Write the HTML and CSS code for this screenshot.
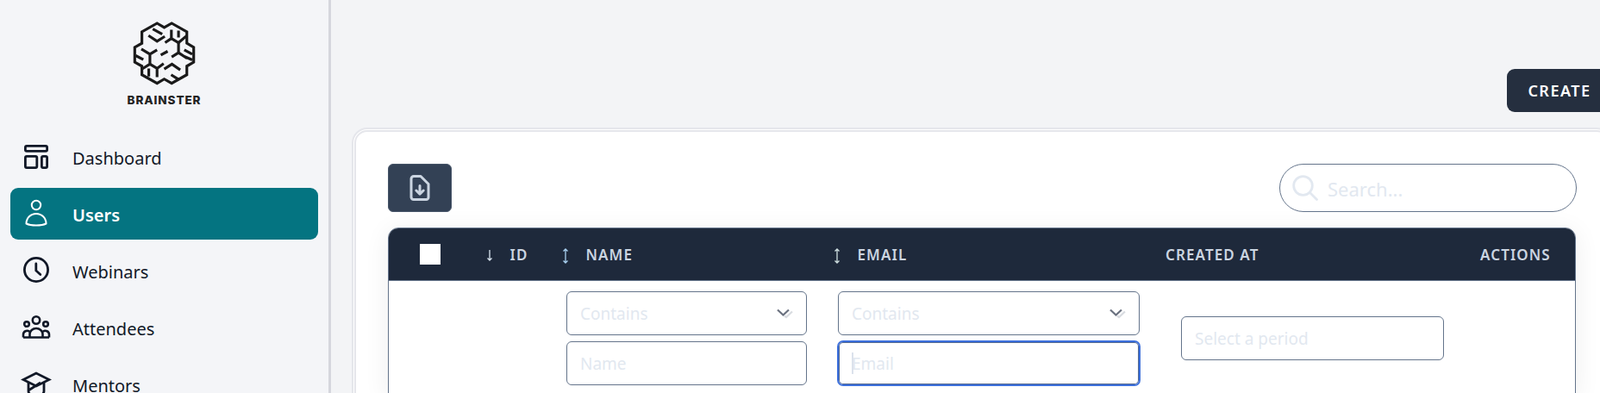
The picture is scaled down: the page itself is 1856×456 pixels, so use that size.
FILE: index.html
```html
<!DOCTYPE html>
<html lang="en">
<head>
    <meta charset="UTF-8">
    <meta name="viewport" content="width=device-width, initial-scale=1.0">
    <title>Users - Brainster</title>
    <link rel="stylesheet" href="styles.css">
</head>
<body>
    <aside class="sidebar">
        <div class="logo">
            <svg class="logo-mark" viewBox="455 70 230 235" fill="none" stroke="#1a1a1a" stroke-width="9.500" stroke-linejoin="miter">
                <path d="M545 82l25 15 26-15 53 30v40l24 14v52l-24 14v30l-53 30-26-15-25 15-53-30v-30l-25-14v-52l25-14v-40z"/>
                <path d="M515 125l30 20 27-17M530 102l33 18M595 105v30l-22 15M595 135l25 15 28-24M620 108v24"/>
                <path d="M490 172l30 18 25-15M520 190v35l-26 16M470 195l27 14M558 193l24-13"/>
                <path d="M620 150v35l-24 15M620 185l30 20M640 175l28 15M640 198l28 12"/>
                <path d="M520 225l25 15 23-17M545 240v30M516 240v28M570 242l27-17 29 20M594 262l26 16"/>
            </svg>
            <span class="logo-name">BRAINSTER</span>
        </div>
        <nav class="nav">
            <a class="nav-item" href="#">
                <svg class="nav-icon" viewBox="0 0 36 36" fill="none" stroke="currentColor" stroke-width="2.800">
                    <rect x="5.400" y="5.400" width="25.200" height="6" rx="1.600"/>
                    <rect x="5.400" y="17.400" width="13.400" height="13.200" rx="1.600"/>
                    <rect x="24.400" y="17.400" width="6.200" height="13.200" rx="1.600"/>
                </svg>
                <span class="nav-label">Dashboard</span>
            </a>
            <a class="nav-item active" href="#">
                <svg class="nav-icon" viewBox="0 0 36 36" fill="none" stroke="currentColor" stroke-width="2">
                    <circle cx="18" cy="8" r="5.200"/>
                    <path d="M6.500 29.500c0-6.500 5-11.500 11.500-11.500s11.500 5 11.500 11.500c-3 1.500-7.500 2-11.500 2s-8.500-.5-11.500-2z"/>
                </svg>
                <span class="nav-label">Users</span>
            </a>
            <a class="nav-item" href="#">
                <svg class="nav-icon" viewBox="0 0 36 36" fill="none" stroke="currentColor" stroke-width="2.800">
                    <circle cx="18" cy="17" r="13.600"/>
                    <path d="M17.800 10v8l5 4.500" stroke-linecap="round"/>
                </svg>
                <span class="nav-label">Webinars</span>
            </a>
            <a class="nav-item" href="#">
                <svg class="nav-icon" viewBox="0 0 36 36" fill="none" stroke="currentColor" stroke-width="2.600">
                    <circle cx="18" cy="9.500" r="4.200"/>
                    <circle cx="7" cy="14" r="2.800"/>
                    <circle cx="29" cy="14" r="2.800"/>
                    <path d="M3 29.500h30M3 29.500v-3.500a4.500 4.500 0 0 1 7-3.500M33 29.500v-3.500a4.500 4.500 0 0 0-7-3.500M10.500 29.500v-4a7.500 6.500 0 0 1 15 0v4"/>
                </svg>
                <span class="nav-label">Attendees</span>
            </a>
            <a class="nav-item" href="#">
                <svg class="nav-icon" viewBox="0 0 36 36" fill="none" stroke="currentColor" stroke-width="2.800">
                    <path d="M18 5L3 12.500 18 20l15-7.500z"/>
                    <path d="M9 16v10c0 3 4 6 9 6s9-3 9-6V16M9 25l14-9"/>
                </svg>
                <span class="nav-label">Mentors</span>
            </a>
        </nav>
    </aside>

    <main class="main">
        <div class="page-actions">
            <button class="create-button" type="button">CREATE</button>
        </div>

        <section class="card">
            <div class="toolbar">
                <button class="export-button" type="button" aria-label="Export">
                    <svg width="24" height="30" viewBox="0 0 24 30" fill="none" stroke="#cbd5e1" stroke-width="3" stroke-linecap="round" stroke-linejoin="round">
                        <path d="M5 1.500h8l9 9v15.500a2.500 2.500 0 0 1-2.500 2.500H5A3 3 0 0 1 2 26V4.500a3 3 0 0 1 3-3z"/>
                        <path d="M12 12.500V22M7.800 18L12 22.200 16.200 18"/>
                    </svg>
                </button>
                <label class="search">
                    <svg width="30" height="30" viewBox="0 0 30 30" fill="none" stroke="#e2e8f0" stroke-width="2.800" stroke-linecap="round">
                        <circle cx="12.500" cy="12.500" r="10.800"/>
                        <path d="M20.500 20.500l8 8"/>
                    </svg>
                    <input class="search-input" type="text" placeholder="Search...">
                </label>
            </div>

            <div class="table-wrap">
                <table class="users-table">
                    <colgroup>
                        <col class="col-check">
                        <col class="col-id">
                        <col class="col-name">
                        <col class="col-email">
                        <col class="col-created">
                        <col>
                    </colgroup>
                    <thead>
                        <tr>
                            <th class="th-check"><span class="checkbox"></span></th>
                            <th class="th-id">
                                <svg class="sort-icon" width="8" height="18" viewBox="0 0 8 18" fill="none" stroke="#d8e4ee" stroke-width="1.300"><path d="M4 2v12M1.500 11.500L4 14l2.500-2.500"/></svg>
                                ID
                            </th>
                            <th>
                                <svg class="sort-icon" width="8" height="18" viewBox="0 0 8 18" fill="none" stroke="#a9d0f0" stroke-width="1.300"><path d="M4 1v16M1.500 3.500L4 1l2.500 2.500M1.500 14.500L4 17l2.500-2.500"/></svg>
                                NAME
                            </th>
                            <th>
                                <svg class="sort-icon" width="8" height="18" viewBox="0 0 8 18" fill="none" stroke="#cfdfe0" stroke-width="1.300"><path d="M4 1v16M1.500 3.500L4 1l2.500 2.500M1.500 14.500L4 17l2.500-2.500"/></svg>
                                EMAIL
                            </th>
                            <th class="th-created">CREATED AT</th>
                            <th class="th-actions">ACTIONS</th>
                        </tr>
                    </thead>
                    <tbody>
                        <tr class="filter-row">
                            <td></td>
                            <td></td>
                            <td>
                                <div class="filter-stack">
                                    <div class="select-wrap">
                                        <select class="field"><option>Contains</option></select>
                                        <svg class="chevrons" width="20" height="12" viewBox="0 0 20 12" fill="none" stroke-width="2.200"><path d="M1 1.500l6.500 6 6.500-6" stroke="#6b7280"/><path d="M9 8.500l2 1.500 7-6.500" stroke="#d8dbe0"/></svg>
                                    </div>
                                    <input class="field" type="text" placeholder="Name">
                                </div>
                            </td>
                            <td>
                                <div class="filter-stack">
                                    <div class="select-wrap">
                                        <select class="field"><option>Contains</option></select>
                                        <svg class="chevrons" width="20" height="12" viewBox="0 0 20 12" fill="none" stroke-width="2.200"><path d="M1 1.500l6.500 6 6.500-6" stroke="#6b7280"/><path d="M9 8.500l2 1.500 7-6.500" stroke="#d8dbe0"/></svg>
                                    </div>
                                    <div class="caret-wrap">
                                        <input class="field focused" type="text" placeholder="Email">
                                    </div>
                                </div>
                            </td>
                            <td class="td-period">
                                <input class="field" type="text" placeholder="Select a period">
                            </td>
                            <td></td>
                        </tr>
                    </tbody>
                </table>
            </div>
        </section>
    </main>
</body>
</html>
```

FILE: styles.css
```css
* {
    box-sizing: border-box;
}

html,
body {
    height: 456px;
    overflow: hidden;
}

body {
    margin: 0;
    display: flex;
    font-family: 'Noto Sans', sans-serif;
    background-color: #f3f4f6;
    color: #111827;
}

.sidebar {
    flex: 0 0 384px;
    height: 456px;
    padding: 23px 12px 0;
    border-right: 3px solid #d5d6dd;
    background-color: #f4f5f8;
}

.logo {
    display: flex;
    flex-direction: column;
    align-items: center;
    height: 129px;
}

.logo-mark {
    width: 77px;
    height: 78px;
}

.logo-name {
    margin-top: 7px;
    font-family: 'Inter', sans-serif;
    font-size: 13.5px;
    font-weight: 800;
    line-height: 16px;
    letter-spacing: 0.9px;
    color: #222222;
}

.nav {
    display: flex;
    flex-direction: column;
    gap: 6px;
}

.nav-item {
    display: flex;
    align-items: center;
    gap: 24px;
    height: 60px;
    padding-left: 12px;
    border-radius: 9px;
    font-size: 20px;
    color: #111827;
    text-decoration: none;
}

.nav-item.active {
    background-color: #047481;
    color: #ffffff;
    font-weight: 600;
}

.nav-label {
    padding-top: 2px;
}

.nav-icon {
    flex: 0 0 36px;
    width: 36px;
    height: 36px;
}

.main {
    flex: 0 0 1486px;
    padding: 80px 0 0 24px;
}

.page-actions {
    display: flex;
    justify-content: flex-end;
}

.create-button {
    width: 122px;
    height: 50px;
    border: none;
    border-radius: 9px;
    background-color: #252f3f;
    color: #ffffff;
    font-family: inherit;
    font-size: 18px;
    font-weight: 600;
    letter-spacing: 1.5px;
}

.card {
    width: 1462px;
    margin-top: 18px;
    padding: 37px;
    border: 5px double #e5e6eb;
    border-radius: 18px;
    background-color: #ffffff;
}

.toolbar {
    display: flex;
    justify-content: space-between;
    margin-bottom: 18px;
}

.export-button {
    display: flex;
    align-items: center;
    justify-content: center;
    width: 74px;
    height: 56px;
    border: 1px solid #475569;
    border-radius: 6px;
    background-color: #334155;
}

.search {
    display: flex;
    align-items: center;
    gap: 11px;
    width: 345px;
    height: 56px;
    margin-right: -1px;
    padding-left: 14px;
    border: 1px solid #64748b;
    border-radius: 28px;
}

.search-input {
    flex: 1;
    min-width: 0;
    border: none;
    outline: none;
    padding: 2px 0 0;
    font-family: inherit;
    font-size: 22px;
    background: transparent;
}

.search-input::placeholder,
.field::placeholder {
    color: #e2e8f0;
    opacity: 1;
}

.table-wrap {
    border: 1px solid #64748b;
    border-radius: 12px 12px 0 0;
    box-shadow: 0 4px 30px rgba(0, 0, 0, 0.07);
}

.users-table {
    width: 100%;
    table-layout: fixed;
    border-collapse: collapse;
}

.col-check {
    width: 89px;
}

.col-id {
    width: 101px;
}

.col-name {
    width: 315px;
}

.col-email {
    width: 386px;
}

.col-created {
    width: 375px;
}

.users-table th {
    height: 60px;
    padding: 2px 0 0 11px;
    background-color: #1e293b;
    border-bottom: 1px solid #64748b;
    color: #cbd5e1;
    font-size: 17px;
    font-weight: 600;
    letter-spacing: 1.1px;
    text-align: left;
    white-space: nowrap;
}

.users-table th:first-child {
    border-top-left-radius: 11px;
}

.users-table th:last-child {
    border-top-right-radius: 11px;
}

.users-table .th-check {
    padding: 0 0 0 36px;
}

.users-table .th-id {
    padding-left: 24px;
}

.users-table .th-created {
    padding-left: 10px;
}

.users-table .th-actions {
    padding: 2px 30px 0 0;
    text-align: right;
}

.checkbox {
    display: block;
    width: 24px;
    height: 24px;
    background-color: #ffffff;
}

.sort-icon {
    margin-right: 14px;
    vertical-align: -4px;
}

.filter-row td {
    padding: 12px 20px 13px 16px;
    vertical-align: middle;
}

.filter-row .td-period {
    padding: 12px 42px 13px 28px;
}

.filter-stack {
    display: flex;
    flex-direction: column;
    gap: 7px;
}

.field {
    display: block;
    width: 100%;
    height: 51px;
    padding: 2px 15px 0;
    border: 1px solid #64748b;
    border-radius: 6px;
    outline: none;
    appearance: none;
    background-color: #ffffff;
    color: #e2e8f0;
    font-family: inherit;
    font-size: 19px;
}

.field.focused {
    border-color: #3b6fdc;
    box-shadow: 0 0 0 1px #3b6fdc, inset 0 0 0 1px #54698f;
}

.select-wrap,
.caret-wrap {
    position: relative;
}

.chevrons {
    position: absolute;
    top: 20px;
    right: 15px;
    pointer-events: none;
}

.caret-wrap::after {
    content: "";
    position: absolute;
    top: 13px;
    left: 16px;
    width: 2px;
    height: 25px;
    background-color: #dbe2ec;
}
```
